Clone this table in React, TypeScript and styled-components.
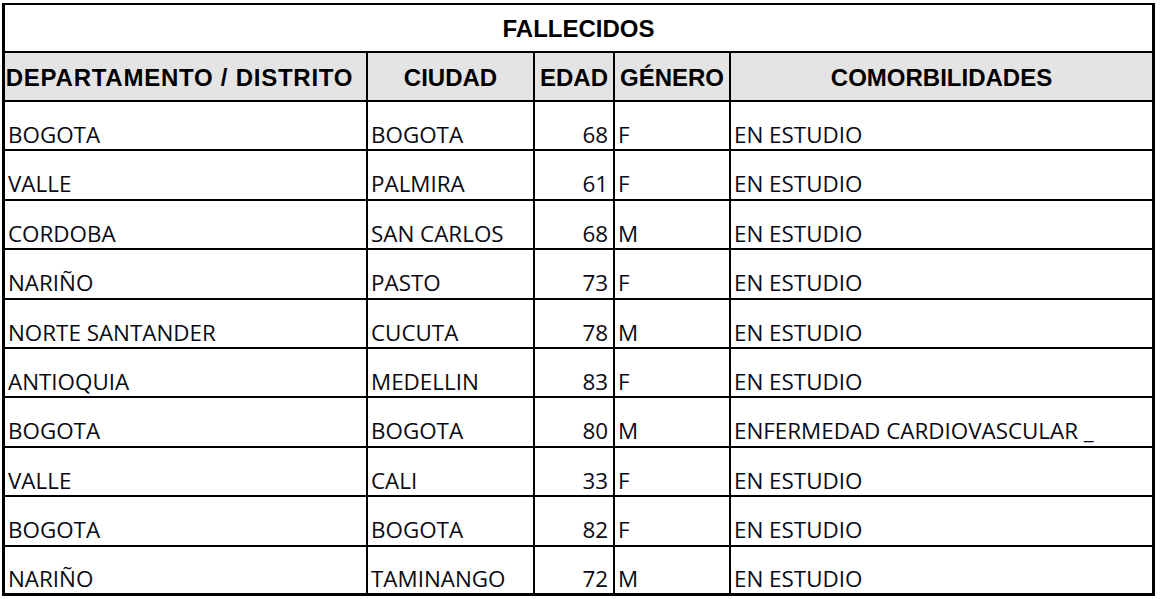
import React from "react";
import styled, { createGlobalStyle } from "styled-components";

const Global = createGlobalStyle`
  html, body { margin: 0; padding: 0; background: #ffffff; }
  body { padding: 3px 0 0 2px; }
`;

const Grid = styled.div`
  display: grid;
  box-sizing: border-box;
  width: 1153px;
  grid-template-columns: 363px 167px 80px 116px 424px;
  grid-template-rows: 48px 49px repeat(10, 49.4px);
  border-left: 3px solid #000;
  border-top: 2px solid #000;
  color: #000;
`;

const Cell = styled.div<{ $last?: boolean; $bottom?: boolean }>`
  box-sizing: border-box;
  border-right: ${(p) => (p.$last ? "3px" : "2px")} solid #000;
  border-bottom: ${(p) => (p.$bottom ? "3px" : "2px")} solid #000;
  min-width: 0;
  overflow: hidden;
  white-space: nowrap;
`;

const TitleCell = styled(Cell)`
  grid-column: 1 / -1;
  display: flex;
  align-items: center;
  justify-content: center;
  font-family: "Liberation Sans", Arial, sans-serif;
  font-weight: 700;
  font-size: 24px;
  padding-top: 2px;
`;

const HeadCell = styled(Cell)<{ $spread?: boolean }>`
  display: flex;
  align-items: center;
  justify-content: center;
  background: #e4e4e4;
  font-family: "Liberation Sans", Arial, sans-serif;
  font-weight: 700;
  font-size: 24px;
  padding-top: 2px;
  letter-spacing: ${(p) => (p.$spread ? "0.75px" : "0")};
  padding-right: ${(p) => (p.$spread ? "12px" : "0")};
`;

const BodyCell = styled(Cell)<{ $right?: boolean }>`
  display: flex;
  align-items: flex-end;
  justify-content: ${(p) => (p.$right ? "flex-end" : "flex-start")};
  padding: 0 ${(p) => (p.$right ? "5px" : "0")} 3px ${(p) => (p.$right ? "0" : "3px")};
  font-family: "Open Sans", "Noto Sans", sans-serif;
  font-size: 22.4px;
  line-height: 1;
  color: #0a0a14;
`;

type Row = [string, string, string, string, string];

const rows: Row[] = [
  ["BOGOTA", "BOGOTA", "68", "F", "EN ESTUDIO"],
  ["VALLE", "PALMIRA", "61", "F", "EN ESTUDIO"],
  ["CORDOBA", "SAN CARLOS", "68", "M", "EN ESTUDIO"],
  ["NARIÑO", "PASTO", "73", "F", "EN ESTUDIO"],
  ["NORTE SANTANDER", "CUCUTA", "78", "M", "EN ESTUDIO"],
  ["ANTIOQUIA", "MEDELLIN", "83", "F", "EN ESTUDIO"],
  ["BOGOTA", "BOGOTA", "80", "M", "ENFERMEDAD CARDIOVASCULAR _"],
  ["VALLE", "CALI", "33", "F", "EN ESTUDIO"],
  ["BOGOTA", "BOGOTA", "82", "F", "EN ESTUDIO"],
  ["NARIÑO", "TAMINANGO", "72", "M", "EN ESTUDIO"],
];

const headers = ["DEPARTAMENTO / DISTRITO", "CIUDAD", "EDAD", "GÉNERO", "COMORBILIDADES"];

export default function App() {
  return (
    <>
      <Global />
      <Grid>
        <TitleCell $last>FALLECIDOS</TitleCell>
        {headers.map((h, i) => (
          <HeadCell key={h} $last={i === 4} $spread={i === 0}>
            {h}
          </HeadCell>
        ))}
        {rows.map((r, ri) =>
          r.map((v, ci) => (
            <BodyCell
              key={`${ri}-${ci}`}
              $right={ci === 2}
              $last={ci === 4}
              $bottom={ri === rows.length - 1}
            >
              {v}
            </BodyCell>
          ))
        )}
      </Grid>
    </>
  );
}
